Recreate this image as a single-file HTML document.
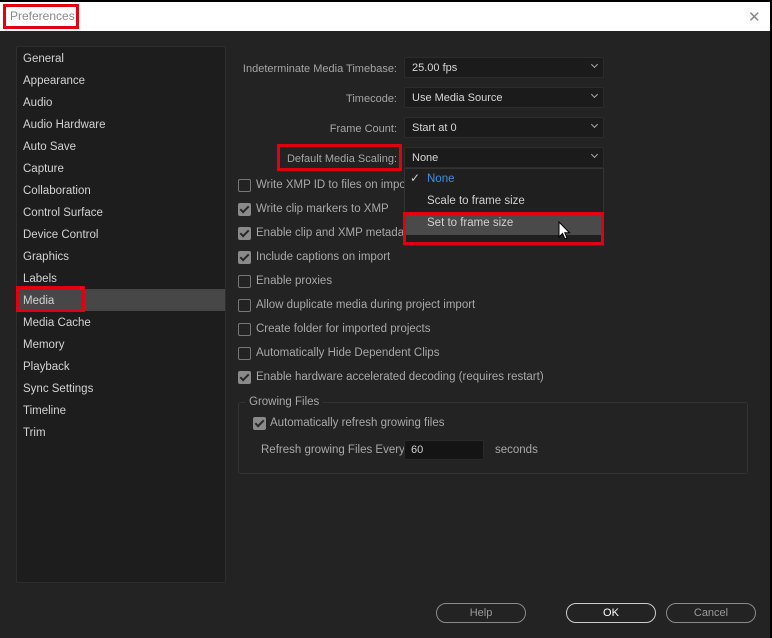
<!DOCTYPE html>
<html><head><style>
*{margin:0;padding:0;box-sizing:border-box}
body{width:772px;height:638px;background:#000;position:relative;overflow:hidden;font-family:"Liberation Sans",sans-serif;font-size:11px;white-space:nowrap}
.a{position:absolute}
#title{left:0;top:2px;width:770px;height:29px;background:#fff}
#main{left:0;top:31px;width:770px;height:607px;background:#232323}
#side{left:16px;top:46px;width:210px;height:537px;background:#1d1d1d;border:1px solid #2e2e2e;border-radius:2px}
.si{position:absolute;left:6px;color:#d2d2d2;font-size:11.5px}
.lbl{color:#a5a5a5;text-align:right;width:260px;left:137px}
.dd{left:404px;width:200px;height:21px;background:#1b1b1b;border:1px solid #2c2c2c;border-radius:2px;color:#d6d6d6;padding:4px 0 0 7px}
.chev{position:absolute;right:6px;top:4px;width:5px;height:5px;border-right:1px solid #aaa;border-bottom:1px solid #aaa;transform:rotate(45deg)}
.cb{left:238px;width:13px;height:13px;border:1.5px solid #777;border-radius:2px}
.cb.on{background:#8a8a8a;border-color:#8a8a8a}
.cb.on:after{content:"";position:absolute;left:3px;top:0px;width:3px;height:7px;border-right:2px solid #2a2a2a;border-bottom:2px solid #2a2a2a;transform:rotate(45deg)}
.ct{left:256px;color:#a8a8a8;font-size:11.5px}
.red{border:3px solid #e00012}
.btn{height:20px;border:1.5px solid #8a8a8a;border-radius:10px;color:#9a9a9a;text-align:center;padding-top:3px}
</style></head><body>
<div id="title" class="a"></div>
<div class="a" style="left:10px;top:9px;color:#8a8a8a;font-size:12px">Preferences</div>
<div class="a red" style="left:3px;top:4px;width:76px;height:25px"></div>
<div class="a" style="left:748px;top:8px;color:#888;font-size:15px">✕</div>
<div id="main" class="a"></div>
<div id="side" class="a">
<div class="si" style="top:6px">General</div>
<div class="si" style="top:28px">Appearance</div>
<div class="si" style="top:50px">Audio</div>
<div class="si" style="top:72px">Audio Hardware</div>
<div class="si" style="top:94px">Auto Save</div>
<div class="si" style="top:116px">Capture</div>
<div class="si" style="top:138px">Collaboration</div>
<div class="si" style="top:160px">Control Surface</div>
<div class="si" style="top:182px">Device Control</div>
<div class="si" style="top:204px">Graphics</div>
<div class="si" style="top:226px">Labels</div>
<div class="a" style="left:0;top:242px;width:208px;height:22px;background:#474747"></div>
<div class="si" style="top:248px">Media</div>
<div class="si" style="top:270px">Media Cache</div>
<div class="si" style="top:292px">Memory</div>
<div class="si" style="top:314px">Playback</div>
<div class="si" style="top:336px">Sync Settings</div>
<div class="si" style="top:358px">Timeline</div>
<div class="si" style="top:380px">Trim</div>
</div>
<div class="a red" style="left:16px;top:286px;width:69px;height:26px"></div>

<div class="a lbl" style="top:63px">Indeterminate Media Timebase:</div>
<div class="a lbl" style="top:93px">Timecode:</div>
<div class="a lbl" style="top:123px">Frame Count:</div>
<div class="a lbl" style="top:153px">Default Media Scaling:</div>
<div class="a red" style="left:277px;top:144px;width:125px;height:27px"></div>
<div class="a dd" style="top:57px">25.00 fps<div class="chev"></div></div>
<div class="a dd" style="top:87px">Use Media Source<div class="chev"></div></div>
<div class="a dd" style="top:117px">Start at 0<div class="chev"></div></div>
<div class="a dd" style="top:147px">None<div class="chev"></div></div>

<div class="a cb" style="top:179px"></div><div class="a ct" style="top:179px">Write XMP ID to files on impor</div>
<div class="a cb on" style="top:203px"></div><div class="a ct" style="top:203px">Write clip markers to XMP</div>
<div class="a cb on" style="top:227px"></div><div class="a ct" style="top:227px">Enable clip and XMP metadata linking</div>
<div class="a cb on" style="top:251px"></div><div class="a ct" style="top:251px">Include captions on import</div>
<div class="a cb" style="top:275px"></div><div class="a ct" style="top:275px">Enable proxies</div>
<div class="a cb" style="top:299px"></div><div class="a ct" style="top:299px">Allow duplicate media during project import</div>
<div class="a cb" style="top:323px"></div><div class="a ct" style="top:323px">Create folder for imported projects</div>
<div class="a cb" style="top:347px"></div><div class="a ct" style="top:347px">Automatically Hide Dependent Clips</div>
<div class="a cb on" style="top:371px"></div><div class="a ct" style="top:371px">Enable hardware accelerated decoding (requires restart)</div>

<div class="a" style="left:404px;top:168px;width:200px;height:78px;background:#1f1f1f;border:1px solid #333"></div>
<div class="a" style="left:410px;top:171px;color:#ccc;font-size:12px">✓</div>
<div class="a" style="left:427px;top:173px;color:#3d8fe0;font-size:11.5px">None</div>
<div class="a" style="left:427px;top:195px;color:#d0d0d0;font-size:11.5px">Scale to frame size</div>
<div class="a" style="left:405px;top:213px;width:198px;height:22px;background:#4a4a4a"></div>
<div class="a" style="left:427px;top:217px;color:#d0d0d0;font-size:11.5px">Set to frame size</div>
<div class="a red" style="left:403px;top:212px;width:201px;height:33px"></div>
<svg class="a" style="left:558px;top:221px" width="13" height="20" viewBox="0 0 13 20"><path d="M1 1 L1 16 L4.5 12.5 L7 18 L9 17 L6.8 11.8 L11.5 11.8 Z" fill="#fff" stroke="#000" stroke-width="1"/></svg>

<div class="a" style="left:238px;top:402px;width:510px;height:72px;border:1px solid #333;border-radius:3px"></div>
<div class="a" style="left:245px;top:396px;background:#232323;padding:0 4px;color:#a8a8a8;font-size:11.5px">Growing Files</div>
<div class="a cb on" style="left:253px;top:417px"></div><div class="a ct" style="left:270px;top:417px">Automatically refresh growing files</div>
<div class="a" style="left:261px;top:444px;color:#a8a8a8;font-size:11.5px">Refresh growing Files Every</div>
<div class="a" style="left:404px;top:440px;width:80px;height:20px;background:#141414;border:1px solid #2a2a2a;border-radius:2px;color:#d0d0d0;padding:3px 0 0 6px">60</div>
<div class="a" style="left:495px;top:444px;color:#a8a8a8;font-size:11.5px">seconds</div>

<div class="a btn" style="left:436px;top:603px;width:90px">Help</div>
<div class="a btn" style="left:566px;top:603px;width:90px;border-color:#ccc;color:#fff">OK</div>
<div class="a btn" style="left:666px;top:603px;width:90px">Cancel</div>
</body></html>
